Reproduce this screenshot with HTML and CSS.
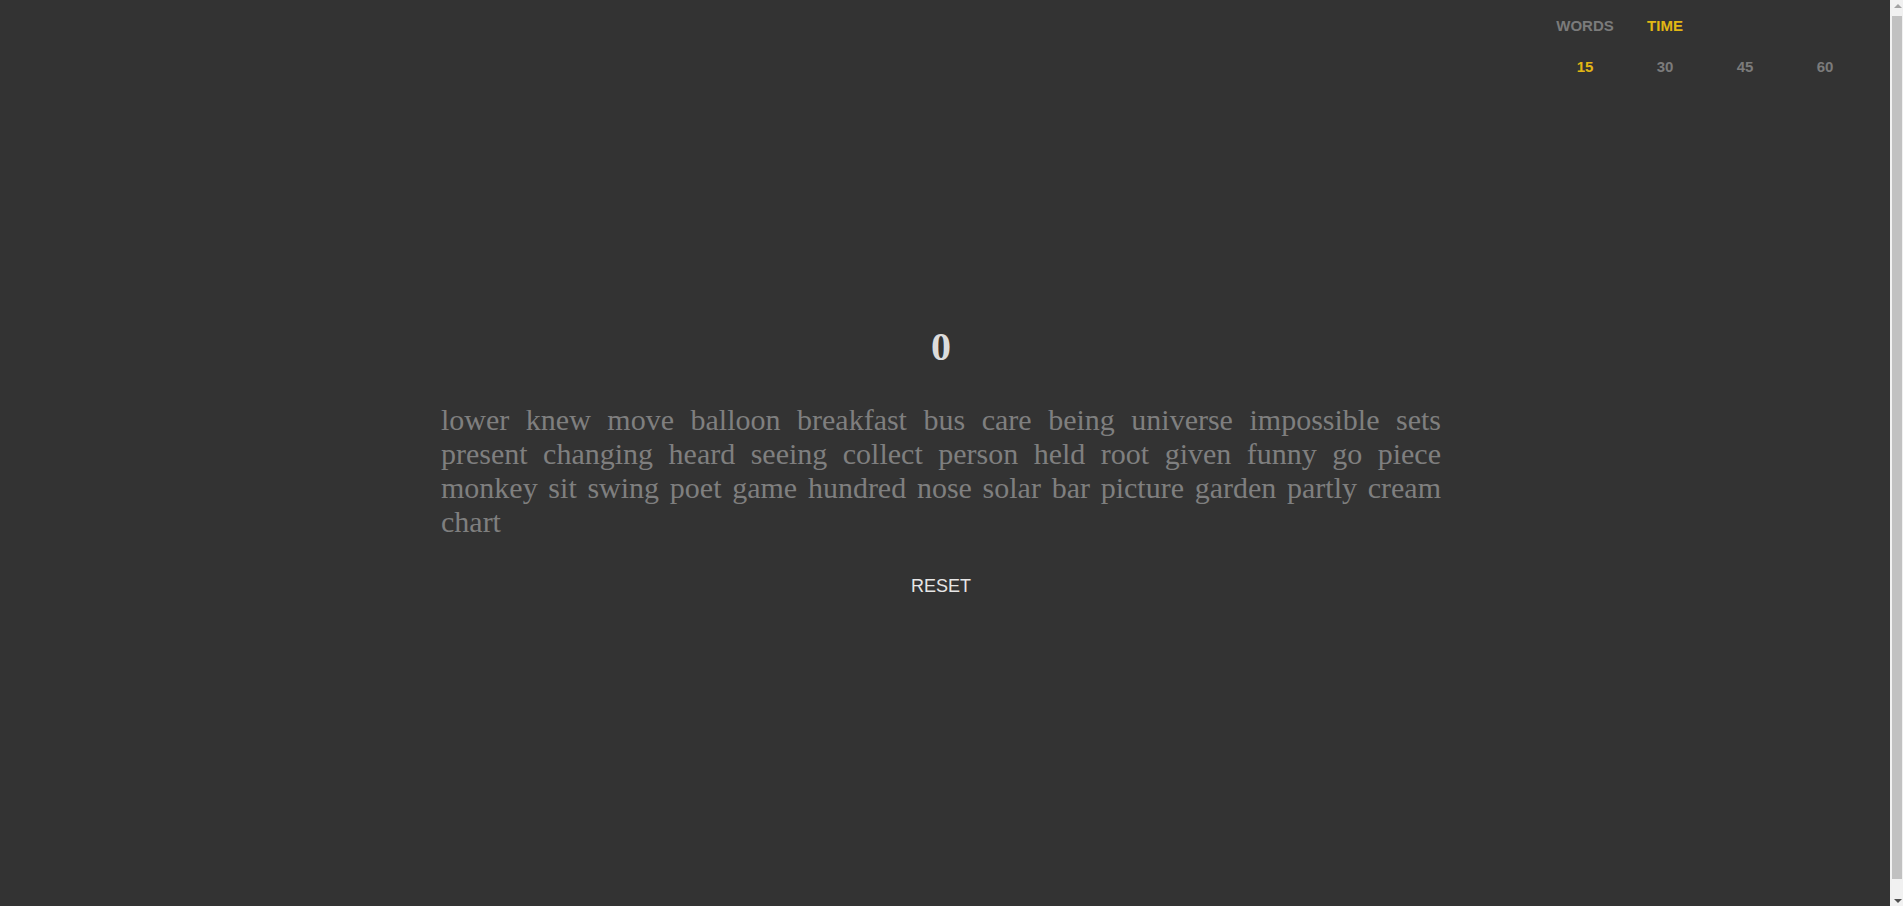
FILE: index.html
```html
<!DOCTYPE html>
<html lang="en">
<head>
<meta charset="utf-8">
<title>Typing Test</title>
<link rel="stylesheet" href="styles.css">
</head>
<body>
  <header class="topbar">
    <nav class="modes">
      <button class="mode-btn">WORDS</button>
      <button class="mode-btn active">TIME</button>
      <span class="mode-spacer"></span>
      <span class="mode-spacer"></span>
      <button class="mode-btn opt active">15</button>
      <button class="mode-btn opt">30</button>
      <button class="mode-btn opt">45</button>
      <button class="mode-btn opt">60</button>
    </nav>
  </header>
  <main class="test">
    <div class="counter">0</div>
    <div class="words">lower knew move balloon breakfast bus care being universe impossible sets present changing heard seeing collect person held root given funny go piece monkey sit swing poet game hundred nose solar bar picture garden partly cream chart</div>
    <button class="reset">RESET</button>
  </main>
  <div class="scrollbar" aria-hidden="true">
    <div class="sb-btn"><span class="sb-arrow up"></span></div>
    <div class="sb-track"><div class="sb-thumb"></div></div>
    <div class="sb-btn"><span class="sb-arrow down"></span></div>
  </div>
</body>
</html>
```
FILE: styles.css
```css
html {
  background: #333333;
}
body {
  margin: 8px 21px 8px 8px;
  min-height: 100vh;
  background: #333333;
  font-family: "Liberation Serif", "Times New Roman", serif;
}
.topbar {
  display: flex;
  justify-content: flex-end;
  padding-top: 9px;
  padding-right: 17px;
}
.modes {
  display: grid;
  grid-template-columns: repeat(4, 80px);
  row-gap: 24px;
}
.mode-btn {
  background: none;
  border: 0;
  padding: 0;
  margin: 0;
  font-family: "Liberation Sans", Arial, sans-serif;
  font-weight: bold;
  font-size: 15px;
  line-height: 17px;
  color: #7b7b7b;
  text-align: center;
  cursor: pointer;
}
.mode-btn.active {
  color: #e2b714;
}
.test {
  display: flex;
  flex-direction: column;
  align-items: center;
  padding-top: 249px;
  padding-right: 8px;
}
.counter {
  font-family: "Liberation Serif", "Times New Roman", serif;
  font-weight: bold;
  font-size: 40px;
  line-height: 46px;
  color: #dcdcdc;
}
.words {
  width: 1000px;
  margin-top: 33px;
  font-size: 30px;
  line-height: 34px;
  color: #7f7f7f;
  text-align: justify;
}
.reset {
  margin-top: 37px;
  background: none;
  border: 0;
  padding: 0;
  font-family: "Liberation Sans", Arial, sans-serif;
  font-size: 18px;
  line-height: 21px;
  color: #e6e6e6;
  cursor: pointer;
}

/* decorative window scrollbar, as in the capture */
.scrollbar {
  position: fixed;
  top: 0;
  right: 0;
  bottom: 0;
  width: 13px;
  background: #f1f1f1;
  display: flex;
  flex-direction: column;
}
.sb-btn {
  height: 16px;
  display: flex;
  align-items: center;
  justify-content: center;
  padding-left: 2px;
}
.sb-arrow {
  width: 0;
  height: 0;
  border-left: 4px solid transparent;
  border-right: 4px solid transparent;
}
.sb-arrow.up {
  border-bottom: 4px solid #a3a3a3;
  margin-top: -4px;
}
.sb-arrow.down {
  border-top: 4px solid #505050;
  margin-top: 6px;
}
.sb-track {
  flex: 1;
  padding: 0 1px 11px 2px;
  display: flex;
}
.sb-thumb {
  flex: 1;
  background: #c1c1c1;
}
```
